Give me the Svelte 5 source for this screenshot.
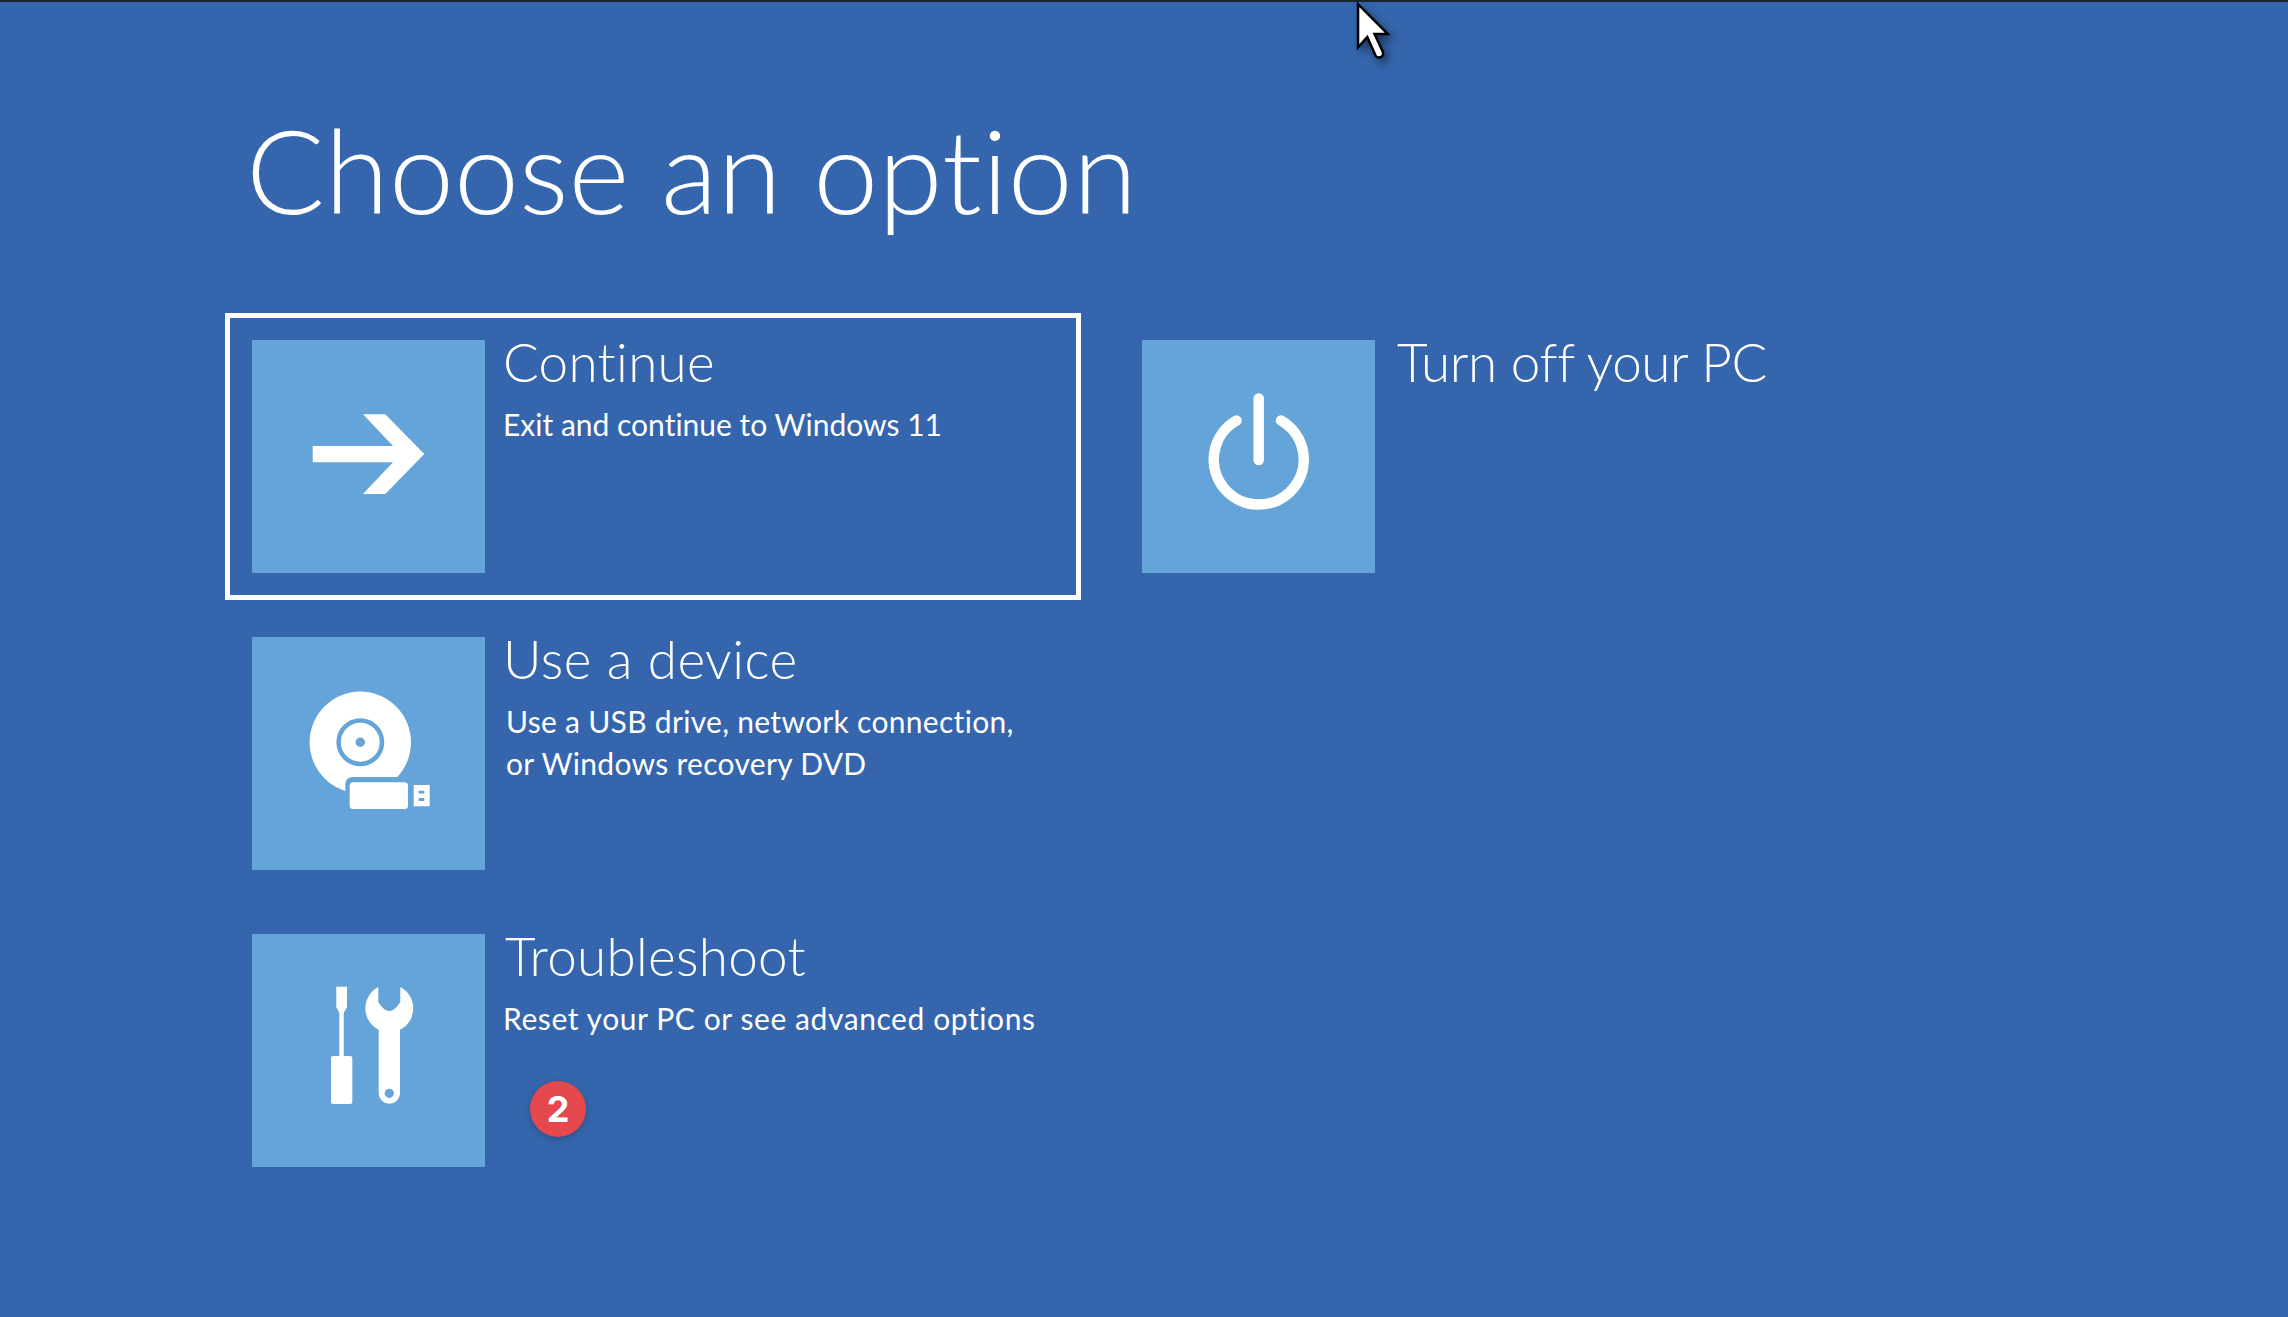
<script>
  const options = [
    { id: 'continue', title: 'Continue', lines: ['Exit and continue to Windows 11'], focused: true },
    { id: 'off', title: 'Turn off your PC', lines: [] },
    { id: 'device', title: 'Use a device', lines: ['Use a USB drive, network connection,', 'or Windows recovery DVD'] },
    { id: 'trouble', title: 'Troubleshoot', lines: ['Reset your PC or see advanced options'] }
  ];
</script>

<main class="screen">
  <h1>Choose an option</h1>
  <div class="grid">
    {#each options as o (o.id)}
      <button class="option {o.id}" class:focused={o.focused}>
        <span class="tile">
          <svg viewBox="0 0 233 233" width="233" height="233" aria-hidden="true">
            {#if o.id === 'continue'}
              <path fill="#fff" d="M60.7 106H141L111 74.3H133.3L172.3 114L133.3 154H111L141 122.3H60.7Z" />
            {:else if o.id === 'off'}
              <path fill="none" stroke="#fff" stroke-width="10.5" stroke-linecap="round" d="M94.5 80.5A45 45 0 1 0 139 80.5" />
              <path fill="none" stroke="#fff" stroke-width="10.5" stroke-linecap="round" d="M116.7 58.5V120" />
            {:else if o.id === 'device'}
              <circle cx="108.3" cy="105.3" r="50.7" fill="#fff" />
              <circle cx="108.3" cy="105.3" r="21.7" fill="none" stroke="#65a4d8" stroke-width="4.5" />
              <circle cx="108.3" cy="105.3" r="4.7" fill="#65a4d8" />
              <rect x="93.3" y="140" width="80" height="40" rx="7" fill="#65a4d8" />
              <rect x="97.7" y="145.3" width="58.3" height="26.7" rx="3.5" fill="#fff" />
              <path fill="#fff" fill-rule="evenodd" d="M161.7 148H177.7V169.3H161.7ZM166.7 153.7V156.4H172.3V153.7ZM166.7 161V164H172.3V161Z" />
            {:else}
              <path fill="#fff" d="M84.3 52.7H95V73L91.7 79V122H98.3Q100.3 122 100.3 124V168Q100.3 170 98.3 170H81Q79 170 79 168V124Q79 122 81 122H87.3V79L84.3 73Z" />
              <path fill="#fff" fill-rule="evenodd" d="M126.3 53A24 24 0 0 0 126.7 95.8V160A10.7 10.7 0 0 0 148 160V95.8A24 24 0 0 0 148.3 53V68Q137.3 86 126.3 68ZM137.3 154.7A4.6 4.6 0 1 0 137.31 154.7Z" />
            {/if}
          </svg>
        </span>
        <span class="text">
          <span class="title">{o.title}</span>
          {#each o.lines as line}
            <span class="desc">{line}</span>
          {/each}
        </span>
      </button>
    {/each}
  </div>

  <span class="badge">2</span>

  <svg class="cursor" viewBox="0 0 36 60" width="37" height="62" aria-hidden="true">
    <path fill="#fff" stroke="#000" stroke-width="2.4" stroke-linejoin="miter" d="M2 2V44L11 34L19 52Q21 55 25 53Q27 51 26 48L18 31H31Z" />
  </svg>
</main>

<style>
  :global(body) {
    margin: 0;
    background: #3565ac;
  }
  .screen {
    box-sizing: border-box;
    position: relative;
    height: 1317px;
    overflow: hidden;
    padding: 0 0 0 225px;
    background: #3565ac;
    border-top: 2px solid #1b2230;
    color: #fff;
    font-family: Lato, "Open Sans", sans-serif;
    font-variant-ligatures: none;
  }
  h1 {
    margin: 0 0 0 21px;
    padding-top: 87px;
    height: 311px;
    box-sizing: border-box;
    font-size: 116.6px;
    line-height: 160px;
    font-weight: 300;
  }
  .grid {
    display: grid;
    grid-template-columns: 856px 700px;
    grid-auto-rows: 287px;
    column-gap: 34px;
    row-gap: 10px;
  }
  .option {
    box-sizing: border-box;
    grid-column: 1;
    display: flex;
    gap: 18px;
    padding: 22px;
    border: 5px solid transparent;
    background: none;
    color: inherit;
    font: inherit;
    font-variant-ligatures: none;
    text-align: left;
  }
  .option.focused {
    border-color: #fff;
  }
  .off {
    grid-column: 2;
    grid-row: 1;
  }
  .tile {
    flex: none;
    width: 233px;
    height: 233px;
    background: #65a4d8;
  }
  .tile svg {
    display: block;
  }
  .text {
    display: flex;
    flex-direction: column;
  }
  .title {
    font-size: 53px;
    line-height: 44px;
    font-weight: 300;
    margin-bottom: 19px;
  }
  .desc {
    font-size: 30px;
    line-height: 42px;
    font-weight: 400;
  }
  .continue .title {
    letter-spacing: 0.3px;
  }
  .off .text {
    padding-left: 4px;
  }
  .off .title {
    letter-spacing: -0.4px;
  }
  .device .title {
    letter-spacing: 0.5px;
  }
  .device .desc {
    padding-left: 3px;
    letter-spacing: 0.3px;
  }
  .trouble .title {
    padding-left: 2px;
    letter-spacing: 0.3px;
  }
  .trouble .desc {
    letter-spacing: 0.58px;
  }
  .badge {
    position: absolute;
    left: 530px;
    top: 1079px;
    width: 56px;
    height: 56px;
    border-radius: 50%;
    background: #e5484d;
    box-shadow: 0 2px 6px rgba(0, 0, 0, 0.2);
    color: #fff;
    font-family: Inter, sans-serif;
    font-weight: 700;
    font-size: 36px;
    line-height: 56px;
    text-align: center;
  }
  .cursor {
    position: absolute;
    left: 1356px;
    top: 0;
    filter: drop-shadow(4px 5px 4px rgba(0, 0, 0, 0.45));
  }
</style>
